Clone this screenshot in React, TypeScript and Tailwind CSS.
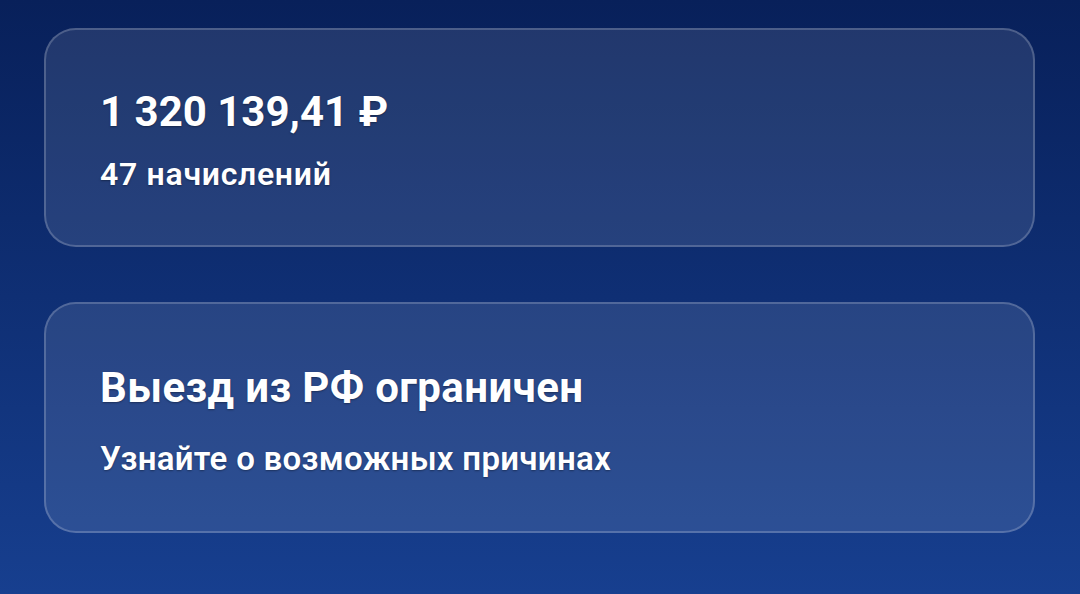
import React from 'react';

interface InfoCardProps {
  title: string;
  subtitle: string;
  className?: string;
  titleClass?: string;
  subtitleClass?: string;
}

const InfoCard: React.FC<InfoCardProps> = ({ title, subtitle, className, titleClass, subtitleClass }) => {
  return (
    <div className={`rounded-[32px] border-2 border-white/20 bg-white/[0.1] px-[54px] ${className ?? ''}`}>
      <div
        className={`text-[42px] leading-[48px] font-bold text-white [text-shadow:0_1px_2px_rgba(0,0,0,0.35)] ${titleClass ?? ''}`}
      >
        {title}
      </div>
      <div className={`font-semibold text-white [text-shadow:0_1px_2px_rgba(0,0,0,0.35)] ${subtitleClass ?? ''}`}>
        {subtitle}
      </div>
    </div>
  );
};

export default function App() {
  return (
    <div
      className="w-[1080px] h-[594px] overflow-hidden bg-gradient-to-b from-[#08205a] via-[#0f2f74] to-[#173f8f] pt-[28px] pl-[44px] pr-[45px] flex flex-col gap-[55px]"
      style={{ fontFamily: 'Roboto, "Noto Sans", sans-serif' }}
    >
      <InfoCard
        className="h-[219px] pt-[58px]"
        title="1 320 139,41 ₽"
        subtitle="47 начислений"
        subtitleClass="text-[32px] leading-[38px] mt-[19px] tracking-[0.7px]"
      />
      <InfoCard
        className="h-[231px] pt-[60px]"
        title="Выезд из РФ ограничен"
        subtitle="Узнайте о возможных причинах"
        titleClass="tracking-[0.4px]"
        subtitleClass="text-[33px] leading-[40px] mt-[27px] tracking-[0.3px]"
      />
    </div>
  );
}
